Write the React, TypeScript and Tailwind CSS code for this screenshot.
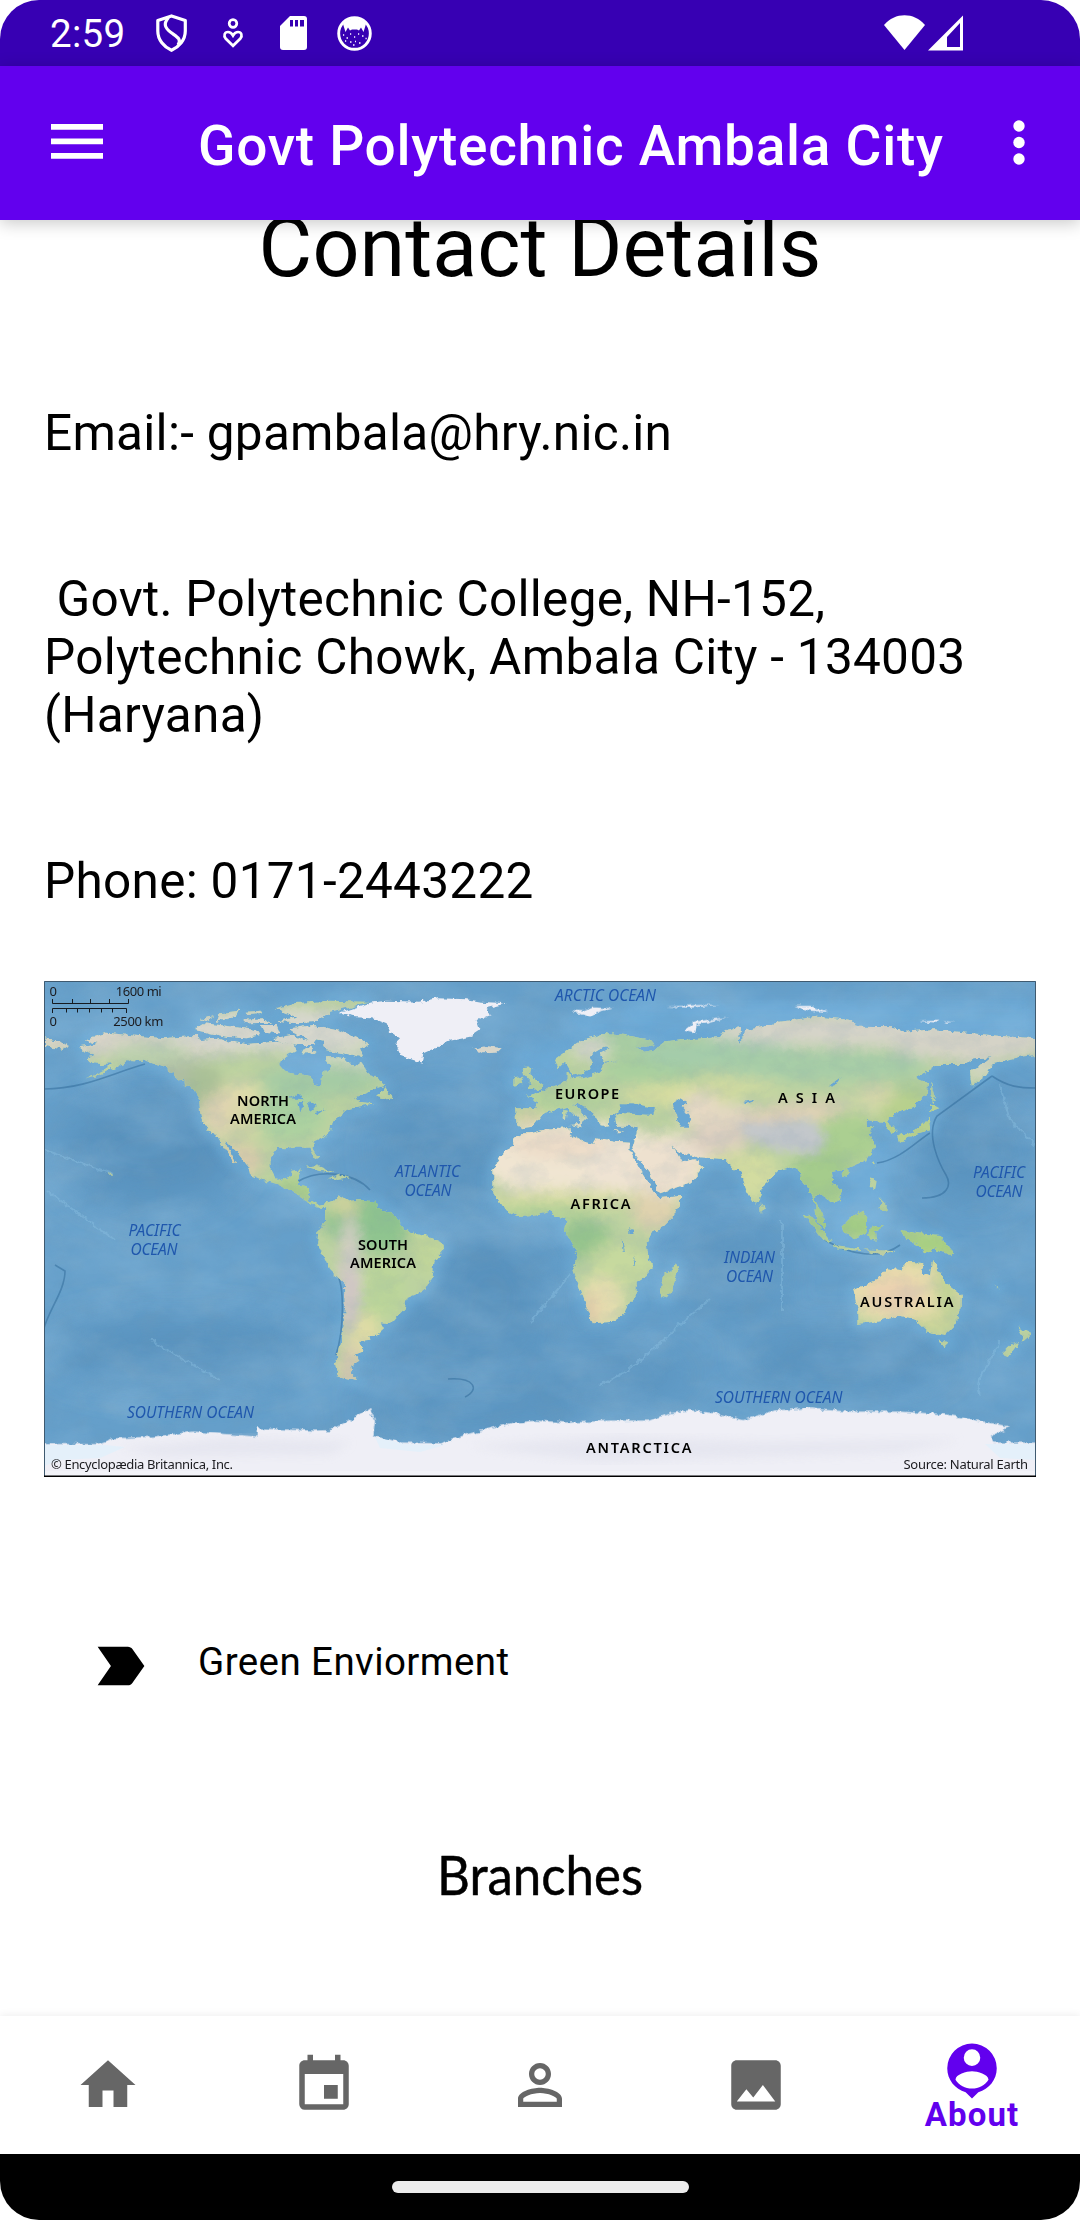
import React from "react";
import { MdHome, MdEvent, MdPersonOutline, MdImage, MdLabelImportant } from "react-icons/md";

const A = "translate(30 970) scale(.33333)";
const B = "translate(370 970) scale(.33333)";
const C = "translate(700 970) scale(.33333)";
const D = "translate(700 1220) scale(.33333)";

const LAND: [string, string][] = [
  // North and Central America
  [A, "M148 232L180 228 200 222 165 208 190 200 230 188 300 196 400 205 460 200 500 198 520 210 570 205 600 215 650 222 700 218 740 215 790 222 800 240 780 252 755 265 748 285 765 305 800 312 845 318 852 345 868 350 878 335 880 310 905 290 890 275 888 262 915 262 945 265 970 290 990 275 1015 310 1040 325 1067 345 1020 362 1010 370 975 385 990 395 1030 400 985 410 950 420 925 440 905 455 900 485 880 505 850 520 848 535 865 560 855 565 838 530 790 530 765 535 745 533 722 560 722 600 735 625 760 632 780 620 785 602 812 598 805 625 800 645 830 648 840 655 838 690 865 705 890 700 900 695 895 715 860 712 820 690 800 670 740 642 700 630 660 612 655 590 620 545 590 515 585 520 605 550 622 582 610 575 590 545 570 515 555 490 535 485 515 450 510 425 508 390 490 360 470 345 440 320 410 295 380 285 340 272 300 270 260 290 215 312 170 325 220 300 250 280 215 282 185 280 170 265 195 255 165 245Z"],
  // Arctic archipelago
  [A, "M495 180L520 160 570 165 640 175 680 180 690 195 650 205 590 200 540 190ZM570 130L625 122 615 140 560 155ZM505 148L545 140 540 155ZM735 115L790 100 900 92 1020 95 960 110 900 125 860 155 800 160 740 155 800 140ZM785 175L850 165 920 180 980 200 1020 225 990 235 1000 262 940 250 890 240 880 215 830 205 790 190ZM690 165L740 165 750 190 700 185ZM730 205L790 195 820 210 855 205 850 225 810 225 750 215ZM815 240L840 230 860 250 820 250ZM640 150L700 145 720 158 650 160ZM650 125L695 122 690 132 655 135Z"],
  [A, "M45 205L80 212 120 228 100 240 45 228ZM830 590L860 586 912 608 870 603ZM895 625L925 612 962 625 925 630ZM1040 380L1062 350 1075 368 1092 385 1070 388ZM238 610L248 612 245 618Z"],
  // South America
  [A, "M888 705L935 677 960 692 1000 690 1045 697 1040 712 1080 730 1105 745 1118 775 1140 785 1190 798 1235 820 1240 840 1210 875 1205 925 1185 962 1130 985 1125 1015 1080 1062 1052 1060 1062 1078 1040 1097 1015 1098 1018 1112 990 1115 1000 1140 975 1150 985 1175 960 1190 965 1210 985 1230 950 1225 922 1215 915 1180 930 1120 945 1020 942 940 900 900 880 855 862 815 865 780 888 755Z"],
  // Africa and Madagascar
  [B, "M460 490L480 490 540 475 598 472 600 495 640 515 670 522 680 505 730 515 780 518 778 540 810 600 835 640 865 685 930 678 930 700 910 740 880 770 845 790 830 820 835 860 845 895 830 915 800 935 800 980 780 1000 765 1030 730 1055 670 1060 655 1030 630 960 610 900 622 850 600 810 585 785 590 745 560 740 540 722 490 735 440 738 400 715 370 670 370 600 400 545 430 530 430 505ZM918 880L926 900 905 960 888 986 870 980 878 920 905 900Z"],
  // Eurasia
  [B, "M435 418L495 418 505 395 470 378 520 365 550 345 590 335 590 305 605 310 605 325 640 322 690 305 700 280 750 270 700 275 690 250 720 235 700 232 660 255 670 275 650 305 620 318 600 300 585 275 565 295 555 270 600 235 650 205 720 190 765 195 840 210 850 222 820 230 800 228 820 245 850 240 880 218 940 210 1000 205 1050 202 1065 180 1110 172 1105 225 1130 180 1180 170 1230 155 1340 140 1445 150 1460 170 1570 172 1610 185 1690 178 1790 188 1890 198 1995 205 1995 255 1950 260 1870 280 1850 315 1805 350 1800 305 1830 290 1865 262 1810 265 1785 285 1700 285 1640 325 1675 340 1670 370 1630 410 1580 425 1550 450 1580 480 1560 488 1540 455 1490 450 1490 470 1515 468 1500 485 1515 530 1490 570 1420 600 1385 605 1390 640 1415 660 1410 690 1390 700 1350 670 1335 690 1365 750 1365 778 1340 750 1335 700 1315 650 1295 635 1290 605 1265 590 1230 600 1175 650 1170 690 1155 705 1130 660 1110 600 1090 600 1065 570 990 565 930 545 910 530 935 575 970 565 1003 590 960 640 870 670 840 610 785 540 800 490 800 470 740 470 735 440 760 430 850 435 855 415 790 400 750 400 745 430 720 440 720 465 695 470 670 430 625 400 612 405 655 445 630 465 625 445 590 410 555 420 520 430 490 470 455 475 440 465Z"],
  // British Isles, Mediterranean islands, Hainan
  [B, "M455 295L485 292 480 312 500 330 520 345 515 355 475 360 485 340 460 315ZM430 325L455 320 460 340 430 350ZM600 465L630 462 635 472ZM580 420L590 422 588 450 578 445ZM730 480L760 484 740 487ZM1425 598L1440 605 1430 620 1415 615Z"],
  // Sakhalin, Japan, Southeast Asia
  [C, "M695 335L708 380 700 400 693 370ZM690 400L718 415 690 425ZM686 440L690 480 650 490 600 515 595 495 640 485 670 460ZM520 570L526 590 516 580ZM515 625L530 630 525 660 512 650ZM535 680L560 705 560 725 535 715 545 700ZM182 700L195 715 185 728ZM425 770L450 745 490 722 502 740 495 790 465 805 430 790ZM310 730L340 745 395 815 362 805Z"],
  // Indonesia, New Guinea, Australia, New Zealand
  [D, "M395 75L480 84 480 93 400 84ZM490 88L590 94 540 105ZM505 40L515 20 555 16 525 35 530 65 510 60ZM605 30L650 40 720 45 765 102 740 100 700 88 675 100 665 75 620 60ZM460 210L530 180 560 145 600 150 625 125 670 130 665 160 690 170 697 115 720 160 740 190 785 225 785 260 760 320 735 345 680 335 660 315 640 295 600 288 520 305 475 312 475 275ZM718 362L745 365 735 385ZM955 318L970 330 995 342 965 368 970 345ZM958 366L925 410 900 405 935 372ZM878 190L900 208 895 206Z"],
];

const ICE: [string, string][] = [
  [B, "M-90 128L0 98 50 92 150 95 200 85 290 88 330 95 410 100 350 115 360 135 320 150 330 180 300 200 240 212 200 232 160 250 155 278 130 270 95 258 75 220 90 205 60 185 50 160 20 148 0 145 -60 140Z"],
  [B, "M600 120L640 124 670 112 730 115 690 125 650 140ZM885 110L960 106 1050 104 960 113ZM940 182L975 155 1078 140 980 165 975 190ZM1270 108L1320 108 1375 126 1320 122ZM1645 152L1705 149 1700 158ZM1720 154L1755 155 1730 158Z"],
  [A, "M20 1422L200 1422 250 1405 370 1400 490 1385 680 1400 680 1375 850 1382 900 1380 960 1350 1020 1315 1035 1350 1030 1398 1120 1418 1230 1420 1320 1390 1450 1358 1520 1352 1620 1358 1740 1352 1860 1352 1920 1330 1980 1320 2070 1332 2140 1350 2230 1322 2330 1315 2390 1320 2460 1325 2610 1325 2740 1332 2860 1355 2940 1370 2880 1400 2890 1418 3040 1418 3040 1530 20 1530Z"],
];

type Tint = [number, number, number, number, string];
const TINTS: Tint[] = [
  // cx, cy, rx, ry, colour
  [150, 1040, 130, 18, "#d8d4c8"], [280, 1030, 120, 22, "#d7d7cd"], [340, 1062, 40, 14, "#ccd6c0"],
  [150, 1054, 40, 12, "#bcd0ae"], [180, 1075, 28, 14, "#aebda3"], [205, 1090, 20, 25, "#a9bf96"],
  [240, 1095, 22, 14, "#dfdcaa"], [222, 1115, 22, 22, "#dfd3b0"], [250, 1120, 22, 16, "#d8d8a4"],
  [290, 1115, 35, 25, "#abd1a0"], [320, 1080, 60, 15, "#a4cba4"], [240, 1160, 24, 18, "#dbceaa"],
  [300, 1190, 28, 14, "#aacd8c"],
  [380, 1220, 55, 32, "#8fc48f"], [425, 1245, 20, 30, "#c1d69a"], [375, 1290, 30, 30, "#bcd69a"],
  [350, 1270, 10, 55, "#d6cec7"], [366, 1335, 16, 22, "#dfdca5"], [350, 1370, 11, 30, "#d8cab0"],
  [345, 1205, 16, 10, "#cfd29c"],
  [575, 1160, 95, 40, "#f0e5d2"], [560, 1145, 50, 14, "#ecdcc8"], [620, 1170, 32, 26, "#efe3d3"],
  [570, 1200, 95, 10, "#d5dba1"], [540, 1213, 60, 9, "#b1d097"], [585, 1240, 26, 20, "#95c48d"],
  [655, 1210, 24, 22, "#dfd2ae"], [620, 1265, 34, 24, "#c6d99e"], [602, 1302, 22, 26, "#e7dfaf"],
  [590, 1310, 8, 18, "#dfc7a9"], [670, 1281, 12, 20, "#bdd394"],
  [670, 1165, 42, 32, "#eee1cf"], [530, 1118, 15, 10, "#dfd5a7"], [560, 1095, 50, 20, "#b4d19b"],
  [620, 1040, 60, 16, "#a9cea3"], [590, 1048, 20, 12, "#d6d7c9"], [650, 1070, 50, 14, "#a8cf9e"],
  [680, 1094, 60, 11, "#d8dda0"], [740, 1085, 40, 10, "#d2dba0"], [720, 1054, 80, 16, "#a4ccaa"],
  [820, 1066, 110, 16, "#a7cda7"], [870, 1030, 170, 17, "#d6d4c9"], [970, 1045, 80, 16, "#d5d3c7"],
  [700, 1110, 22, 18, "#e6d9c4"], [730, 1120, 38, 16, "#e4d8c2"], [820, 1112, 60, 12, "#dfd1b6"],
  [770, 1121, 34, 9, "#ead8c0"], [718, 1140, 30, 17, "#dccfc0"], [880, 1100, 40, 14, "#cbd8a4"],
  [765, 1125, 32, 12, "#dccdb6"], [740, 1175, 40, 25, "#d3dca0"], [850, 1138, 35, 26, "#abcf91"],
  [820, 1180, 32, 30, "#a5cc8c"], [905, 1095, 30, 14, "#a8cb9a"], [980, 1070, 18, 12, "#cfd4be"],
  [880, 1095, 20, 9, "#d9d7ab"], [910, 1120, 30, 30, "#b7d08d"],
  [905, 1290, 65, 35, "#e6dcac"], [895, 1295, 30, 18, "#ebd1b0"], [948, 1285, 12, 35, "#bfd294"],
  [920, 1250, 20, 12, "#d5dca2"], [930, 1326, 30, 10, "#c9d498"], [855, 1225, 60, 15, "#a3cc85"],
  [930, 1245, 35, 14, "#a7cf82"],
];

type Label = [string, number, number, number, string];
// text, left, baseline, width, kind
const LABELS: Label[] = [
  ["NORTH", 237, 1106, 52, "land"], ["AMERICA", 230, 1124, 66, "land"],
  ["SOUTH", 358, 1250, 50, "land"], ["AMERICA", 350, 1268, 66, "land"],
  ["EUROPE", 555, 1098.7, 64, "land"], ["AFRICA", 570.5, 1209, 60, "land"],
  ["ASIA", 778, 1103, 57, "land"], ["AUSTRALIA", 860, 1307, 93.5, "land"],
  ["ANTARCTICA", 586, 1453, 105.5, "land"],
  ["ARCTIC OCEAN", 555, 1001.3, 101, "sea"], ["ATLANTIC", 395, 1177, 65, "sea"], ["OCEAN", 404.5, 1195.7, 47, "sea"],
  ["PACIFIC", 973, 1178, 52, "sea"], ["OCEAN", 975.5, 1196.5, 47, "sea"],
  ["PACIFIC", 128.5, 1236, 52, "sea"], ["OCEAN", 130.5, 1254.7, 47, "sea"],
  ["INDIAN", 724, 1263, 51, "sea"], ["OCEAN", 726, 1281.7, 47, "sea"],
  ["SOUTHERN OCEAN", 127, 1418, 127, "sea"], ["SOUTHERN OCEAN", 715, 1403, 127.5, "sea"],
  ["0", 49.5, 996, 7, "note"], ["1600 mi", 115.7, 996, 46, "note"],
  ["0", 49.5, 1025.7, 7, "note"], ["2500 km", 113.3, 1025.7, 50, "note"],
  ["© Encyclopædia Britannica, Inc.", 51, 1468.7, 182, "note"], ["Source: Natural Earth", 903.5, 1468.7, 124.5, "note"],
];

const LABEL_STYLE: Record<string, string> = {
  land: "fill-black text-[14.5px] font-semibold",
  sea: "fill-[#1f57ad] text-[15.5px] italic",
  note: "fill-[#1b1b1f] text-[13px]",
};

function WorldMap() {
  return (
    <svg viewBox="44 981 992 496" className="block h-[496px] w-[992px]">
      <defs>
        <clipPath id="land">
          {LAND.map(([t, d], i) => <path key={i} transform={t} d={d} />)}
        </clipPath>
        <filter id="soft" x="-20%" y="-20%" width="140%" height="140%"><feGaussianBlur stdDeviation="7" /></filter>
        <filter id="shelf"><feGaussianBlur stdDeviation="5" /></filter>
        <filter id="wide" x="-30%" y="-30%" width="160%" height="160%"><feGaussianBlur stdDeviation="20" /></filter>
        <filter id="coast" filterUnits="userSpaceOnUse" x="44" y="981" width="992" height="496">
          <feTurbulence type="fractalNoise" baseFrequency="0.16" numOctaves="3" seed="4" result="n" />
          <feDisplacementMap in="SourceGraphic" in2="n" scale="6" xChannelSelector="R" yChannelSelector="G" />
        </filter>
        <filter id="relief" filterUnits="userSpaceOnUse" x="44" y="981" width="992" height="496">
          <feTurbulence type="fractalNoise" baseFrequency="0.035 0.06" numOctaves="5" seed="9" />
          <feColorMatrix values="0 0 0 0 0.2  0 0 0 0 0.32  0 0 0 0 0.42  1.3 0 0 0 -0.52" />
        </filter>
        <filter id="swell" filterUnits="userSpaceOnUse" x="44" y="981" width="992" height="496">
          <feTurbulence type="fractalNoise" baseFrequency="0.012 0.02" numOctaves="6" seed="21" />
          <feColorMatrix values="0 0 0 0 0.55  0 0 0 0 0.76  0 0 0 0 0.9  0 1.2 0 0 -0.42" />
        </filter>
      </defs>
      <rect x="44" y="981" width="992" height="496" fill="#659fca" />
      <g filter="url(#wide)" fill="#5690bc" opacity=".85">
        <ellipse cx="150" cy="1150" rx="90" ry="55" /><ellipse cx="440" cy="1150" rx="60" ry="50" />
        <ellipse cx="490" cy="1300" rx="60" ry="70" /><ellipse cx="420" cy="1345" rx="40" ry="26" />
        <ellipse cx="975" cy="1150" rx="50" ry="50" /><ellipse cx="730" cy="1270" rx="50" ry="45" />
        <ellipse cx="840" cy="1360" rx="110" ry="26" /><ellipse cx="180" cy="1350" rx="130" ry="30" />
        <ellipse cx="470" cy="1410" rx="110" ry="20" /><ellipse cx="610" cy="1375" rx="80" ry="26" />
      </g>
      <g filter="url(#shelf)" fill="none" stroke="#6caad6" strokeWidth="40" strokeLinejoin="round" opacity=".75">
        {LAND.map(([t, d], i) => i === 2 ? null : <path key={i} transform={t} d={d} />)}
      </g>
      <g filter="url(#soft)" fill="#6ba8d5">
        <path d="M560 1020L640 1000 1036 1000V1036H560ZM270 1050H345V1095H280ZM840 1160L900 1140 880 1230 830 1250ZM660 1040V1000H900V1030ZM510 1050L570 1040 560 1080 520 1090Z" />
      </g>
      <rect x="44" y="981" width="992" height="496" filter="url(#relief)" opacity=".24" />
      <rect x="44" y="981" width="992" height="496" filter="url(#swell)" opacity=".3" />
      <g fill="none" stroke="#2d6796" strokeWidth="1.6" opacity=".5">
        <path d="M44 1089C85 1089 115 1072 145 1064" /><path d="M44 1328C50 1308 65 1290 65 1271L55 1265" />
        <path d="M992 1076L937 1116C925 1135 940 1165 946 1175S948 1198 922 1198" /><path d="M992 1076C1008 1087 1020 1088 1036 1088" />
        <path d="M448 1379C475 1377 480 1390 465 1397" /><path d="M336 1272C345 1285 344 1330 336 1355" />
        <path d="M877 1163C900 1160 918 1140 930 1133" /><path d="M825 1240C850 1255 880 1260 900 1245" />
        <path d="M297 1182C320 1168 355 1173 370 1190" />
      </g>
      <g filter="url(#coast)" fill="none" stroke="#8cc1e2" strokeWidth="2" opacity=".4">
        <path d="M45 1150L113 1174M46 1190L115 1240" /><path d="M782 1220V1310" /><path d="M530 1322L570 1275M600 1385C640 1370 680 1320 710 1300" />
        <path d="M1000 1085L1010 1120 1036 1145" /><path d="M150 1340L220 1380M980 1395C970 1380 995 1360 1000 1340" />
      </g>
      <g filter="url(#coast)">
        <path transform={B} d="M313 235L350 228 395 235 380 248 340 250Z" fill="#d8d6cb" />
        <g clipPath="url(#land)">
          <rect x="44" y="981" width="992" height="496" fill="#bcd2a0" />
          <g filter="url(#soft)">
            {TINTS.map(([cx, cy, rx, ry, c], i) => <ellipse key={i} cx={cx} cy={cy} rx={rx} ry={ry} fill={c} />)}
          </g>
          <g filter="url(#shelf)">
            <path d="M733 1122L765 1123 810 1119 827 1138 816 1155 775 1150 748 1138Z" fill="#c3c7cb" />
            <path d="M340 1265L358 1280 354 1320 345 1345 345 1280Z" fill="#cfc5c4" />
          </g>
          <rect x="44" y="981" width="992" height="496" filter="url(#relief)" opacity=".25" />
        </g>
        <g fill="#68a6d3">
          <path transform={B} d="M905 400L930 385 948 395 935 410 960 440 955 470 930 470 920 430Z" />
          <path transform={A} d="M775 385L810 372 825 388ZM805 400L820 395 812 428ZM830 395L860 405 845 422ZM850 430L885 418 860 435Z" />
          <path transform={B} d="M775 775L795 780 790 795 775 795ZM790 855L798 890 793 890ZM755 805L765 845 758 845Z" />
          <path transform={C} d="M425 318L410 340 385 350 410 330ZM130 395L170 390 140 402Z" />
        </g>
      </g>
      <g filter="url(#coast)" fill="#efeff6">
        {ICE.map(([t, d], i) => <path key={i} transform={t} d={d} />)}
      </g>
      <g fill="#e4f0fa">
        <path d="M44 1445H105L125 1447 100 1458 60 1460 44 1466Z" /><path d="M375 1437L405 1444 445 1445 420 1452 380 1448Z" />
        <path d="M985 1444H1036V1460L1000 1458Z" />
      </g>
      <g filter="url(#shelf)" fill="#e0e1ec" opacity=".6">
        <path d="M120 1448L230 1438 350 1442 330 1454 160 1456ZM470 1446L620 1436 760 1442 960 1440 900 1452 600 1462Z" />
      </g>
      <rect x="44" y="1471" width="992" height="5" fill="#f2f3f8" />
      <path d="M52.500 999V1003.500H128.500V999M72.500 999V1003M90.500 999V1003M109.500 999V1003M52.500 1013V1008.500H126.500V1013M66.500 1009V1012.500M77.500 1009V1012.500M89.500 1009V1012.500M101.500 1009V1012.500M112.500 1009V1012.500" fill="none" stroke="#151a20" strokeWidth="1" />
      {LABELS.map(([t, x, y, w, k], i) => (
        <text key={i} x={x} y={y} textLength={w} className={"font-['Noto_Sans'] " + LABEL_STYLE[k]}>{t}</text>
      ))}
      <path d="M44.500 1476V981.500H1035.500V1476" fill="none" stroke="#3f5a70" strokeWidth="1" />
      <path d="M44 1476.300H1036" stroke="#000" strokeWidth="1.400" />
    </svg>
  );
}

function StatusBar() {
  return (
    <div className="flex h-[66px] shrink-0 items-center bg-[#3700b3] pl-[50px] text-white">
      <span className="w-[106px] pt-[2px] text-[38.5px] leading-[64px] tracking-[0.3px]">2:59</span>
      <svg width="32" height="38" viewBox="0 0 32 38" fill="none" stroke="white" strokeWidth="3.200" strokeLinejoin="round">
        <path d="M15.500 1.900L29.300 6.500V17C29.300 26 23 33 15.500 36.300 8 33 1.800 26 1.800 17V6.500Z" />
        <path d="M12.500 3.500C7 10 9 14 15 18.500S26 25 22 31" />
      </svg>
      <svg width="22" height="32" viewBox="0 0 22 32" fill="none" stroke="white" strokeWidth="2.700" className="ml-[34px]">
        <circle cx="11" cy="6.500" r="3.800" />
        <path d="M11 28.800L3.600 21.500C1.400 18.500 2.500 15 6 15 8.500 15 10 16.800 11 18.500 12 16.800 13.500 15 16 15 19.500 15 20.600 18.500 18.400 21.500Z" />
      </svg>
      <svg width="27" height="34" viewBox="0 0 27 34" className="ml-9">
        <path d="M10 0H24Q27 0 27 3V31Q27 34 24 34H3Q0 34 0 31V10Z" fill="white" />
        <path d="M10 4h3v6.500h-3zM15 4h3v6.500h-3zM20 4h4v6.500h-4z" fill="#3700b3" />
      </svg>
      <svg width="35" height="35" viewBox="0 0 35 35" className="ml-[30px]">
        <circle cx="17.500" cy="17.500" r="15.800" fill="none" stroke="white" strokeWidth="2.900" />
        <path d="M6 8C11 1 24 1 29 8L26.500 16 24 11.500 22 14.500 20 13.500H15L13 14.500 11 11.500 8.500 16Z" fill="white" />
        <path d="M6 19h1.200M9.500 22h1.500M13 18h1.200M17 21h1.200M21 18h1.200M25 20h1.500M28.500 22.500h1.200M8 25h1.200M13 26h1.500M18 25.500h1M22 27h1.500M16 29h1.500" stroke="white" strokeWidth="1.300" />
      </svg>
      <svg width="80" height="36" viewBox="0 0 80 36" className="ml-[512px]">
        <path d="M0 10C11-3 30-3 41 10L20.500 35Z" fill="white" />
        <path d="M44 35.500L79 .5V35.500ZM63 22V32H76V8Z" fill="white" fillRule="evenodd" />
      </svg>
    </div>
  );
}

function AppBar() {
  return (
    <header className="relative z-10 flex h-[154px] shrink-0 items-center bg-[#6200ee] text-white shadow-[0_3px_16px_rgba(0,0,0,0.22)]">
      <svg width="52" height="36" viewBox="0 0 52 36" className="-mt-[2px] ml-[51px]">
        <path d="M0 0h52v5.700H0zM0 14.500h52v5.700H0zM0 29h52v5.700H0z" fill="white" />
      </svg>
      <h1 className="ml-[95px] w-[760px] whitespace-nowrap pt-[6px] text-[55px] font-medium leading-[64px] tracking-[0.72px]">Govt Polytechnic Ambala City</h1>
      <svg width="12" height="46" viewBox="0 0 12 46" fill="white" className="ml-[55px]">
        <circle cx="6" cy="6" r="5.700" /><circle cx="6" cy="22.500" r="5.700" /><circle cx="6" cy="39" r="5.700" />
      </svg>
    </header>
  );
}

function BottomNav() {
  return (
    <nav className="relative z-10 grid h-[138px] shrink-0 grid-cols-5 place-items-center bg-white text-[66px] text-[#666666] shadow-[0_-1px_8px_rgba(0,0,0,0.07)]">
      <MdHome />
      <MdEvent />
      <MdPersonOutline />
      <MdImage />
      <div className="flex h-full flex-col items-center pt-[22px] text-[#6200ee]">
        <svg viewBox="0 0 24 24" className="size-[66px] shrink-0" fill="currentColor">
          <path fillRule="evenodd" d="M12 2a9 9 0 0 0-9 9c0 4.170 2.840 7.670 6.690 8.690L12 22l2.310-2.310C18.160 18.670 21 15.170 21 11a9 9 0 0 0-9-9zm0 2.100a3 3.050 0 1 1 0 6.100a3 3.050 0 0 1 0-6.100zm0 14.300c-2.500 0-4.710-1.280-6-3.220.03-1.990 4-3.080 6-3.080s5.970 1.090 6 3.080c-1.290 1.940-3.500 3.220-6 3.220z" />
        </svg>
        <span className="-mt-[8px] text-[33px] font-bold leading-[38px] tracking-[1.1px]">About</span>
      </div>
    </nav>
  );
}

export default function App() {
  return (
    <div className="bg-white">
      <div className="flex h-[2220px] w-[1080px] flex-col overflow-hidden rounded-[39px] bg-white font-['Roboto',sans-serif] text-black">
        <StatusBar />
        <AppBar />
        <main className="flex min-h-0 flex-1 flex-col overflow-hidden">
          <h2 className="-mt-[21px] text-center text-[82.5px] leading-[97px] tracking-[0.1px]">Contact Details</h2>
          <div className="flex flex-col gap-[108px] px-11 pt-[108px] text-[49.5px] leading-[58px] tracking-[0.28px]">
            <p>Email:- gpambala@hry.nic.in</p>
            <p className="whitespace-pre">{" Govt. Polytechnic College, NH-152,\nPolytechnic Chowk, Ambala City - 134003\n(Haryana)"}</p>
            <p>Phone: 0171-2443222</p>
          </div>
          <div className="px-11 pt-[71px]"><WorldMap /></div>
          <div className="flex items-start pl-[88px] pt-[155px]">
            <MdLabelImportant className="mt-px size-[66px]" />
            <span className="ml-11 pt-[7px] text-[38.5px] leading-[45px] tracking-[0.42px]">Green Enviorment</span>
          </div>
          <h3 className="mt-[136px] flex justify-center">
            <svg width="210" height="70" viewBox="0 0 210 70" className="overflow-visible">
              <text x="2" y="60" textLength="206" lengthAdjust="spacingAndGlyphs" strokeWidth="0.5" strokeLinejoin="round" className="fill-black stroke-black font-['Lato',sans-serif] text-[55px] font-normal">Branches</text>
            </svg>
          </h3>
          <div className="mt-auto h-[53px] shrink-0 rounded-t-[12px]" />
        </main>
        <BottomNav />
        <div className="flex h-[66px] shrink-0 items-center justify-center bg-black">
          <div className="h-3 w-[297px] rounded-full bg-[#ececec]" />
        </div>
      </div>
    </div>
  );
}
